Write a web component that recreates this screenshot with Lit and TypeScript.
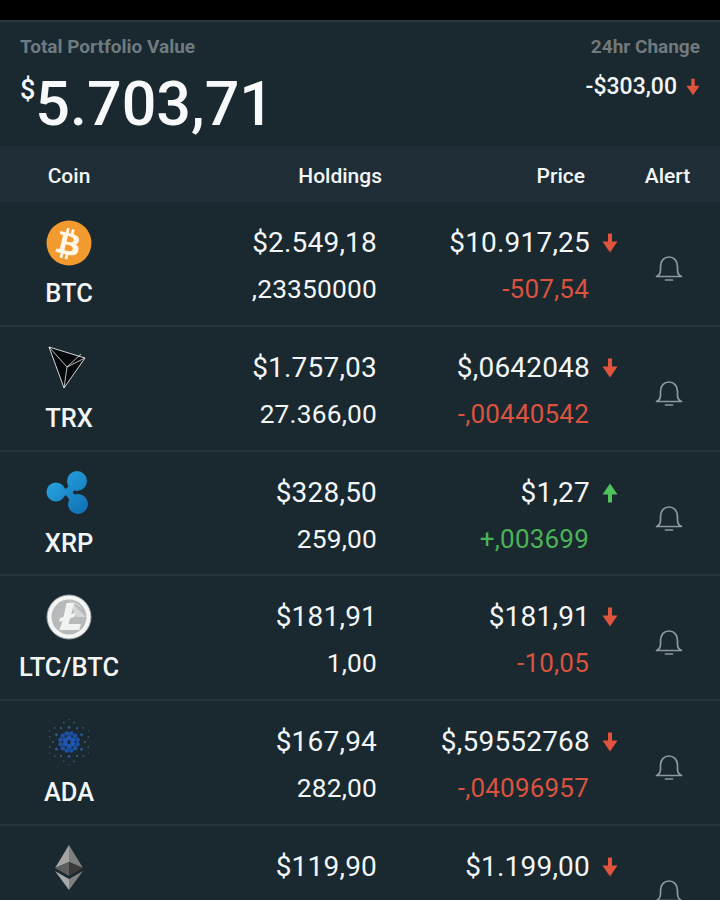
import { LitElement, html, svg, css } from "lit";
import { customElement } from "lit/decorators.js";

const arrow = (up: boolean) => html`<svg class="arrow ${up ? "up" : "down"}" viewBox="0 0 16 20" width="16" height="20">
  ${up
    ? svg`<path d="M8 0.5 L15.5 11.5 L10 11.5 L10 19.5 L6 19.5 L6 11.5 L0.5 11.5 Z" fill="currentColor"/>`
    : svg`<path d="M8 19.5 L15.5 8.5 L10 8.5 L10 0.5 L6 0.5 L6 8.5 L0.5 8.5 Z" fill="currentColor"/>`}
</svg>`;

const bell = html`<svg class="bell" viewBox="0 0 28 28" width="28" height="28" fill="none" stroke="currentColor" stroke-width="1.7" stroke-linecap="round" stroke-linejoin="round">
  <path d="M1.5 21.5 H26.5 C24 20.5 22.5 18.5 22.5 15 V11.5 C22.5 5.8 19 2 14 2 C9 2 5.5 5.8 5.5 11.5 V15 C5.5 18.5 4 20.5 1.5 21.5 Z"/>
  <path d="M10.5 25 H17.5"/>
</svg>`;

const btc = svg`<circle cx="23" cy="23" r="22.5" fill="#f29a2e"/>
  <g transform="translate(23 23) rotate(14) scale(0.088) translate(-142 -168)">
    <path fill="#fff6e8" fill-rule="evenodd" d="M217 167c18.6-9.5 30.3-26.2 27.6-54-3.7-38-34.8-50.8-75.9-54.4V6h-32.2v51.3c-8.5 0-17.1.2-25.7.3V6H78.6v52.7c-7 .1-13.8.3-20.5.3H13.7v34.3s23.8-.5 23.4 0c13 0 17.3 7.6 18.5 14.1v60c.9 0 2.1 0 3.4.2h-3.4v84.2c-.6 4.1-3 10.6-12.1 10.6.4.4-23.4 0-23.4 0l-6.4 38.3h41.9c7.8 0 15.4.2 23 .2v53.4h32.1v-52.8c8.8.2 17.4.3 25.7.3v52.5h32.2v-53.3c54.1-3.1 92-16.7 96.7-67.5 3.8-40.8-15.4-59.1-46.1-66.4ZM110.3 94.6c18.2 0 75.2-5.8 75.2 32 0 36.3-57 32-75.2 32V94.6Zm0 166.8v-70.6c21.8 0 90.2-6.3 90.2 35.3 0 39.9-68.4 35.3-90.2 35.3Z"/>
  </g>`;

const trx = svg`<path d="M3 2 L39 13 L18 43 Z" fill="#05080a" stroke="#e8ecec" stroke-width="0.9" stroke-linejoin="round"/>
  <path d="M3 2 L21 22 L18 43 M21 22 L39 13 M21 22 L35 9" fill="none" stroke="#e8ecec" stroke-width="0.8"/>`;

const xrp = svg`<defs><linearGradient id="xg" gradientUnits="userSpaceOnUse" x1="4" y1="6" x2="40" y2="44"><stop offset="0" stop-color="#2aa5e2"/><stop offset="1" stop-color="#0f6fb2"/></linearGradient></defs>
  <circle cx="31" cy="11" r="10" fill="url(#xg)"/>
  <circle cx="32" cy="34" r="10" fill="url(#xg)"/>
  <circle cx="10" cy="22" r="9.5" fill="url(#xg)"/>
  <path d="M10.7 22 H22 L31 12 M22 22 L32 35" fill="none" stroke="url(#xg)" stroke-width="7"/>`;

const ltc = svg`<circle cx="23" cy="23" r="22" fill="#f4f5f5" stroke="#9ea2a4" stroke-width="1"/>
  <circle cx="23" cy="23" r="17.5" fill="#b7babb"/>
  <path d="M23 6 L40 23 L30 23 Z M23 6 L32 10 L37 15 Z" fill="#d4d6d6"/>
  <path d="M20.5 9 H28.2 L25.2 20.3 L29.6 18.6 L28.4 22.8 L24 24.4 L22.5 30 H35 L33.3 36 H13.5 L16.5 26.7 L12.8 28 L14 24 L17.6 22.7 Z" fill="#f1f2f2"/>`;

const adaDots = () => {
  const out = [];
  const rings: [number, number, number, number, string][] = [
    [4.2, 6, 2.5, 0, "#1f56b0"],
    [8.8, 12, 2.3, 15, "#1c50a6"],
    [14.5, 6, 1.4, 0, "#2d5a8c"],
    [16, 6, 1.1, 30, "#3a5a74"],
    [20, 12, 0.9, 15, "#3d5665"],
    [22.5, 6, 0.7, 0, "#3d5665"],
  ];
  for (const [r, n, size, off, fill] of rings) {
    for (let i = 0; i < n; i++) {
      const a = ((off + (360 / n) * i) * Math.PI) / 180;
      out.push(svg`<circle cx=${23 + r * Math.sin(a)} cy=${23 - r * Math.cos(a)} r=${size} fill=${fill}/>`);
    }
  }
  return out;
};

const eth = svg`<path d="M23 1 L9 24 L23 18 Z" fill="#a4a4a4"/>
  <path d="M23 1 L37 24 L23 18 Z" fill="#7f7f7f"/>
  <path d="M23 18 L9 24 L23 32 Z" fill="#5f5f5f"/>
  <path d="M23 18 L37 24 L23 32 Z" fill="#3b3b3b"/>
  <path d="M9 27 L23 46 L23 35 Z" fill="#a8a8a8"/>
  <path d="M37 27 L23 46 L23 35 Z" fill="#808080"/>`;

interface Row {
  icon: unknown;
  name: string;
  value: string;
  qty: string;
  price: string;
  delta: string;
  up?: boolean;
}

const rows: Row[] = [
  { icon: btc, name: "BTC", value: "$2.549,18", qty: ",23350000", price: "$10.917,25", delta: "-507,54" },
  { icon: trx, name: "TRX", value: "$1.757,03", qty: "27.366,00", price: "$,0642048", delta: "-,00440542" },
  { icon: xrp, name: "XRP", value: "$328,50", qty: "259,00", price: "$1,27", delta: "+,003699", up: true },
  { icon: ltc, name: "LTC/BTC", value: "$181,91", qty: "1,00", price: "$181,91", delta: "-10,05" },
  { icon: adaDots(), name: "ADA", value: "$167,94", qty: "282,00", price: "$,59552768", delta: "-,04096957" },
  { icon: eth, name: "", value: "$119,90", qty: "", price: "$1.199,00", delta: "" },
];

@customElement("app-root")
export class AppRoot extends LitElement {
  static styles = css`
    :host {
      display: block;
      width: 720px;
      height: 900px;
      overflow: hidden;
      background: #1a2830;
      color: #f3f6f7;
      font-family: Roboto, "Liberation Sans", sans-serif;
    }
    .status {
      height: 20px;
      background: #000;
    }
    .summary {
      height: 126px;
      box-sizing: border-box;
      border-top: 2px solid #2a373e;
      padding: 14px 20px 0;
      display: flex;
      justify-content: space-between;
    }
    .label {
      font-size: 19px;
      line-height: 22px;
      font-weight: 700;
      color: #6e7b80;
    }
    .total {
      display: flex;
      align-items: flex-start;
      margin-top: 10px;
      font-size: 61px;
      line-height: 72px;
      font-weight: 500;
      color: #f7f9fa;
    }
    .total sup {
      font-size: 27px;
      line-height: 32px;
      font-weight: 500;
      margin: 6px 0 0;
      vertical-align: baseline;
    }
    .change {
      display: flex;
      flex-direction: column;
      align-items: flex-end;
    }
    .change .label {
      color: #71797c;
    }
    .delta-total {
      display: flex;
      align-items: center;
      gap: 9px;
      margin-top: 15px;
      font-size: 23px;
      line-height: 28px;
      font-weight: 500;
    }
    .delta-total .arrow {
      width: 14px;
    }
    .thead {
      height: 56px;
      box-sizing: border-box;
      padding-top: 4px;
      background: #1f2e36;
      display: grid;
      grid-template-columns: 138px 244px 203px 1fr;
      align-items: center;
      font-size: 21px;
      font-weight: 500;
    }
    .thead .c1 {
      text-align: center;
    }
    .thead .c2,
    .thead .c3 {
      text-align: right;
    }
    .thead .c4 {
      text-align: center;
      padding-left: 31px;
      box-sizing: border-box;
      padding-right: 1px;
    }
    .row {
      height: 124.8px;
      box-sizing: border-box;
      border-bottom: 2px solid #25333b;
      display: grid;
      grid-template-columns: 138px 239px 243px 1fr;
    }
    .coin {
      display: flex;
      flex-direction: column;
      align-items: center;
      padding-top: 18px;
    }
    .logo {
      width: 46px;
      height: 46px;
      display: block;
    }
    .name {
      margin-top: 12px;
      font-size: 25.5px;
      line-height: 30px;
      font-weight: 500;
      white-space: nowrap;
    }
    .num {
      padding-top: 24px;
      display: flex;
      flex-direction: column;
      align-items: flex-end;
      gap: 12px;
      font-size: 28px;
      line-height: 34px;
      letter-spacing: 0.2px;
    }
    .line {
      display: flex;
      align-items: center;
      height: 34px;
    }
    .qty {
      font-size: 26.3px;
    }
    .arrow {
      display: block;
      flex: none;
    }
    .arrow.down {
      color: #e0533d;
    }
    .arrow.up {
      color: #4fc35b;
    }
    .price .arrow {
      margin: 0 2px 0 12px;
    }
    .delta {
      margin-right: 31px;
      font-size: 26px;
    }
    .delta.neg {
      color: #d9533f;
    }
    .delta.pos {
      color: #4cb257;
    }
    .alert {
      display: flex;
      justify-content: center;
      padding: 53px 3px 0 0;
      color: #8d999e;
    }
  `;

  render() {
    return html`
      <div class="status"></div>
      <section class="summary">
        <div>
          <div class="label">Total Portfolio Value</div>
          <div class="total"><sup>$</sup><span>5.703,71</span></div>
        </div>
        <div class="change">
          <div class="label">24hr Change</div>
          <div class="delta-total"><span>-$303,00</span>${arrow(false)}</div>
        </div>
      </section>
      <div class="thead">
        <div class="c1">Coin</div>
        <div class="c2">Holdings</div>
        <div class="c3">Price</div>
        <div class="c4">Alert</div>
      </div>
      ${rows.map(
        (r) => html`<div class="row">
          <div class="coin">
            <svg class="logo" viewBox="0 0 46 46">${r.icon}</svg>
            <div class="name">${r.name}</div>
          </div>
          <div class="num">
            <div class="line">${r.value}</div>
            <div class="line qty">${r.qty}</div>
          </div>
          <div class="num price">
            <div class="line">${r.price}${arrow(!!r.up)}</div>
            <div class="line delta ${r.up ? "pos" : "neg"}">${r.delta}</div>
          </div>
          <div class="alert">${bell}</div>
        </div>`
      )}
    `;
  }
}
